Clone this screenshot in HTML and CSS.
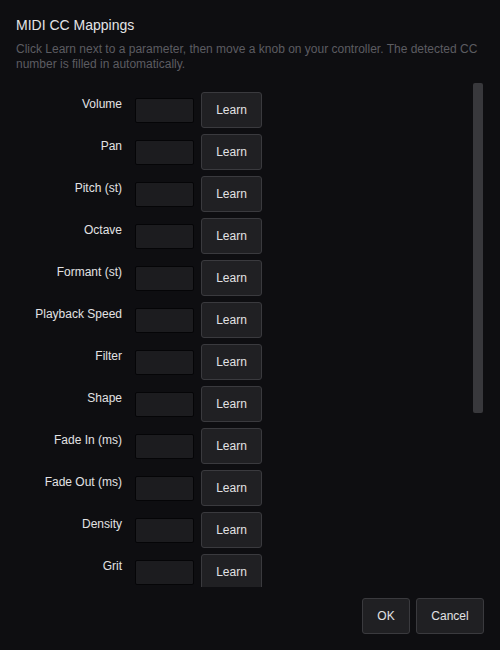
FILE: index.html
```html
<!DOCTYPE html>
<html lang="en">
<head>
<meta charset="utf-8">
<title>MIDI CC Mappings</title>
<link rel="stylesheet" href="styles.css">
</head>
<body>
<div class="dialog">
  <h1 class="title">MIDI CC Mappings</h1>
  <p class="desc">Click Learn next to a parameter, then move a knob on your controller. The detected CC number is filled in automatically.</p>
  <div class="scroll-wrap">
    <div class="scroll">
      <div class="row"><span class="label">Volume</span><input class="cc" type="text"><button class="btn">Learn</button></div>
      <div class="row"><span class="label">Pan</span><input class="cc" type="text"><button class="btn">Learn</button></div>
      <div class="row"><span class="label">Pitch (st)</span><input class="cc" type="text"><button class="btn">Learn</button></div>
      <div class="row"><span class="label">Octave</span><input class="cc" type="text"><button class="btn">Learn</button></div>
      <div class="row"><span class="label">Formant (st)</span><input class="cc" type="text"><button class="btn">Learn</button></div>
      <div class="row"><span class="label">Playback Speed</span><input class="cc" type="text"><button class="btn">Learn</button></div>
      <div class="row"><span class="label">Filter</span><input class="cc" type="text"><button class="btn">Learn</button></div>
      <div class="row"><span class="label">Shape</span><input class="cc" type="text"><button class="btn">Learn</button></div>
      <div class="row"><span class="label">Fade In (ms)</span><input class="cc" type="text"><button class="btn">Learn</button></div>
      <div class="row"><span class="label">Fade Out (ms)</span><input class="cc" type="text"><button class="btn">Learn</button></div>
      <div class="row"><span class="label">Density</span><input class="cc" type="text"><button class="btn">Learn</button></div>
      <div class="row"><span class="label">Grit</span><input class="cc" type="text"><button class="btn">Learn</button></div>
    </div>
    <div class="thumb"></div>
  </div>
  <div class="footer">
    <button class="btn btn-ok">OK</button>
    <button class="btn btn-cancel">Cancel</button>
  </div>
</div>
</body>
</html>
```

FILE: styles.css
```css
html, body {
  margin: 0;
  padding: 0;
  background: #0e0e11;
}
body {
  font-family: "Liberation Sans", Arial, sans-serif;
  color: #e2e2e4;
}
.dialog {
  box-sizing: border-box;
  height: 650px;
  padding: 17px 16px 16px 16px;
  display: flex;
  flex-direction: column;
}
.title {
  margin: 0;
  font-size: 14px;
  line-height: 17px;
  font-weight: normal;
  color: #e4e4e6;
}
.desc {
  margin: 8px 0 0 0;
  font-size: 12px;
  line-height: 15px;
  color: #5c5c61;
}
.scroll-wrap {
  position: relative;
  margin: 11px 1px 0 0;
  flex: 1;
  min-height: 0;
}
.scroll {
  height: 100%;
  overflow: hidden;
  padding: 9px 0 0 0;
  display: flex;
  flex-direction: column;
  gap: 6px;
  box-sizing: border-box;
}
.thumb {
  position: absolute;
  top: 0;
  right: 0;
  width: 10px;
  height: 330px;
  background: #38383c;
  border-radius: 2px;
}
.row {
  display: flex;
  align-items: center;
  flex-shrink: 0;
}
.label {
  width: 106px;
  text-align: right;
  font-size: 12px;
  line-height: 14px;
  align-self: flex-start;
  margin-top: 5px;
  margin-right: 13px;
  color: #e2e2e4;
}
.cc {
  box-sizing: border-box;
  width: 59px;
  height: 25px;
  margin: 0 7px 0 0;
  padding: 0 4px;
  background: #1c1c1f;
  border: 1px solid #050507;
  border-radius: 2px;
  color: #e2e2e4;
  font-family: inherit;
  font-size: 12px;
  outline: none;
}
.btn {
  box-sizing: border-box;
  height: 36px;
  padding: 0;
  background: #202023;
  border: 1px solid #3a3a3e;
  border-radius: 3px;
  color: #e2e2e4;
  font-family: "Liberation Sans", Arial, sans-serif;
  font-size: 12px;
  line-height: 14px;
}
.row .btn {
  width: 61px;
}
.footer {
  margin-top: 11px;
  display: flex;
  justify-content: flex-end;
  gap: 6px;
}
.btn-ok {
  width: 48px;
}
.btn-cancel {
  width: 68px;
}
```
